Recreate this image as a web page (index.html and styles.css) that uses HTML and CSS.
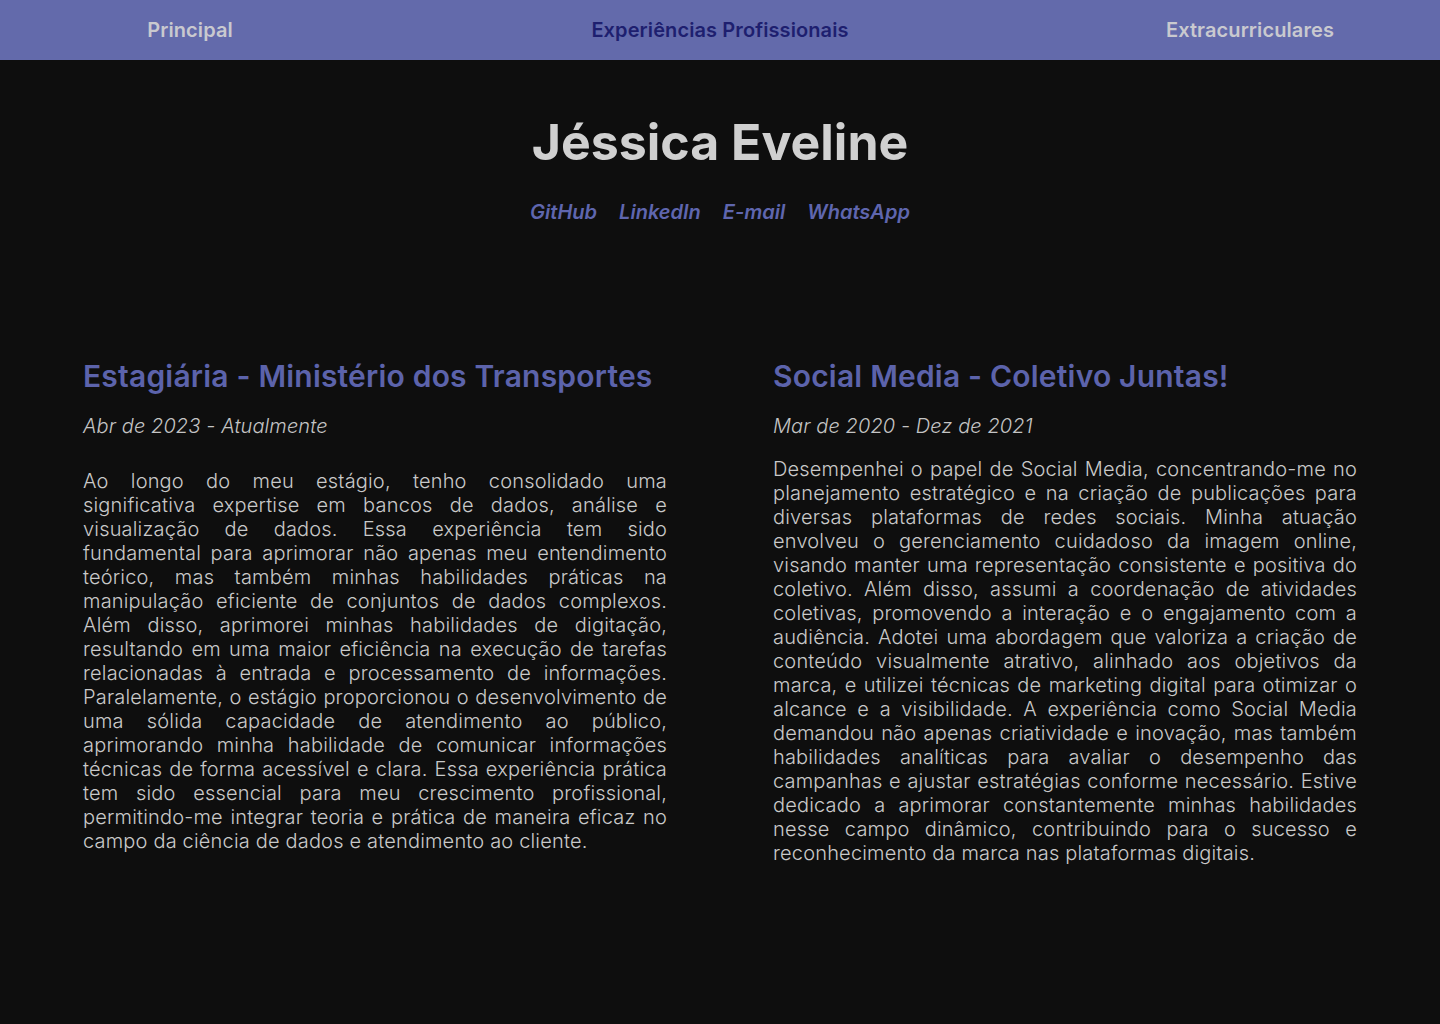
FILE: index.html
```html
<!DOCTYPE html>
<html lang="pt-BR">
<head>
<meta charset="utf-8">
<title>Jéssica Eveline - Experiências Profissionais</title>
<link rel="stylesheet" href="styles.css">
</head>
<body>
<nav class="topnav">
  <a class="nav-item" href="#">Principal</a>
  <a class="nav-item active" href="#">Experiências Profissionais</a>
  <a class="nav-item" href="#">Extracurriculares</a>
</nav>
<header class="hero">
  <h1 class="name">Jéssica Eveline</h1>
  <div class="links">
    <a href="#">GitHub</a>
    <a href="#">LinkedIn</a>
    <a href="#">E-mail</a>
    <a href="#">WhatsApp</a>
  </div>
</header>
<main class="experiences">
  <section class="job">
    <h2 class="job-title">Estagiária - Ministério dos Transportes</h2>
    <p class="job-date">Abr de 2023 - Atualmente</p>
    <p class="job-text first">Ao longo do meu estágio, tenho consolidado uma significativa expertise em bancos de dados, análise e visualização de dados. Essa experiência tem sido fundamental para aprimorar não apenas meu entendimento teórico, mas também minhas habilidades práticas na manipulação eficiente de conjuntos de dados complexos. Além disso, aprimorei minhas habilidades de digitação, resultando em uma maior eficiência na execução de tarefas relacionadas à entrada e processamento de informações. Paralelamente, o estágio proporcionou o desenvolvimento de uma sólida capacidade de atendimento ao público, aprimorando minha habilidade de comunicar informações técnicas de forma acessível e clara. Essa experiência prática tem sido essencial para meu crescimento profissional, permitindo-me integrar teoria e prática de maneira eficaz no campo da ciência de dados e atendimento ao cliente.</p>
  </section>
  <section class="job">
    <h2 class="job-title">Social Media - Coletivo Juntas!</h2>
    <p class="job-date">Mar de 2020 - Dez de 2021</p>
    <p class="job-text">Desempenhei o papel de Social Media, concentrando-me no planejamento estratégico e na criação de publicações para diversas plataformas de redes sociais. Minha atuação envolveu o gerenciamento cuidadoso da imagem online, visando manter uma representação consistente e positiva do coletivo. Além disso, assumi a coordenação de atividades coletivas, promovendo a interação e o engajamento com a audiência. Adotei uma abordagem que valoriza a criação de conteúdo visualmente atrativo, alinhado aos objetivos da marca, e utilizei técnicas de marketing digital para otimizar o alcance e a visibilidade. A experiência como Social Media demandou não apenas criatividade e inovação, mas também habilidades analíticas para avaliar o desempenho das campanhas e ajustar estratégias conforme necessário. Estive dedicado a aprimorar constantemente minhas habilidades nesse campo dinâmico, contribuindo para o sucesso e reconhecimento da marca nas plataformas digitais.</p>
  </section>
</main>
</body>
</html>
```
FILE: styles.css
```css
* { box-sizing: border-box; }
html, body { margin: 0; padding: 0; }
body {
  background: #0e0e0e;
  color: #c9c9c9;
  font-family: Inter, "Noto Sans", sans-serif;
  min-height: 1024px;
}
a { text-decoration: none; }
.topnav {
  height: 60px;
  background: #636aab;
  display: flex;
  justify-content: center;
  align-items: center;
  gap: 230px;
}
.nav-item {
  width: 300px;
  text-align: center;
  font-size: 20px;
  font-weight: 600;
  letter-spacing: 0.1px;
  color: #c9c9cf;
}
.nav-item.active { color: #1e1f6f; }
.hero {
  text-align: center;
  padding-top: 52px;
}
.name {
  margin: 0;
  font-size: 50px;
  font-weight: 700;
  line-height: 60px;
  color: #d0d0d0;
}
.links {
  margin-top: 28px;
  display: flex;
  justify-content: center;
  gap: 22px;
}
.links a {
  font-size: 20px;
  font-style: italic;
  font-weight: 600;
  color: #5f66ae;
  line-height: 24px;
}
.experiences {
  width: 1274px;
  margin: 134px auto 0;
  display: grid;
  grid-template-columns: 584px 584px;
  justify-content: space-between;
  align-items: start;
}
.job-title {
  margin: 0;
  font-size: 30px;
  font-weight: 600;
  line-height: 36px;
  letter-spacing: 0.2px;
  color: #5c63ab;
}
.job-date {
  margin: 20px 0 0;
  font-size: 20px;
  font-style: italic;
  font-weight: 300;
  line-height: 24px;
  letter-spacing: 0.1px;
  color: #c4c4c4;
}
.job-text {
  margin: 19px 0 0;
  font-size: 20px;
  font-weight: 300;
  line-height: 24px;
  letter-spacing: 0.18px;
  text-align: justify;
  color: #c9c9c9;
}
.job-text.first { margin-top: 31px; }
```
